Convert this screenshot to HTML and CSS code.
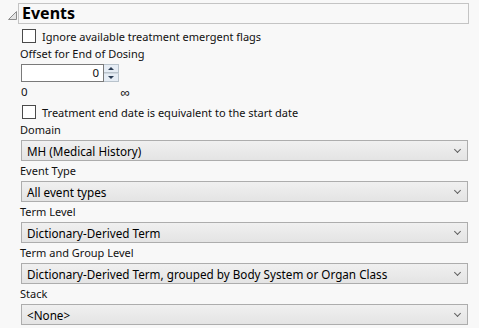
FILE: index.html
```
<!DOCTYPE html>
<html lang="en">
<head>
    <meta charset="UTF-8">
    <title>Events</title>
    <link rel="stylesheet" href="styles.css">
</head>
<body>
    <div class="panel">
        <div class="outline-head">
            <svg class="disclosure" width="9" height="9" viewBox="0 0 9 9">
                <path d="M8.5 0.5 L8.5 8.5 L0.5 8.5 Z" fill="#e4e4e4" stroke="#8c8c8c" stroke-width="1"/>
            </svg>
            <div class="outline-title">Events</div>
        </div>

        <div class="outline-body">
            <label class="check-row">
                <span class="checkbox"></span>
                <span>Ignore available treatment emergent flags</span>
            </label>

            <div class="field-label offset-label">Offset for End of Dosing</div>
            <div class="number-row">
                <div class="number-box">0</div>
                <div class="spinner">
                    <div class="spin-btn spin-up"><span class="arrow-up"></span></div>
                    <div class="spin-btn spin-down"><span class="arrow-down"></span></div>
                </div>
            </div>
            <div class="range-row">
                <span class="range-min">0</span>
                <span class="range-max">&infin;</span>
            </div>

            <label class="check-row check-second">
                <span class="checkbox"></span>
                <span>Treatment end date is equivalent to the start date</span>
            </label>

            <div class="field-label">Domain</div>
            <div class="combo"><span>MH (Medical History)</span><span class="chevron"></span></div>

            <div class="field-label">Event Type</div>
            <div class="combo"><span>All event types</span><span class="chevron"></span></div>

            <div class="field-label">Term Level</div>
            <div class="combo"><span>Dictionary-Derived Term</span><span class="chevron"></span></div>

            <div class="field-label">Term and Group Level</div>
            <div class="combo"><span>Dictionary-Derived Term, grouped by Body System or Organ Class</span><span class="chevron"></span></div>

            <div class="field-label">Stack</div>
            <div class="combo"><span>&lt;None&gt;</span><span class="chevron"></span></div>
        </div>
    </div>
</body>
</html>
```

FILE: styles.css
```
body {
    margin: 0;
    background: #f8f8f8;
    font-family: 'Noto Sans', sans-serif;
    font-size: 11px;
    color: #111;
}

.panel {
    padding: 3px 10px 0 8px;
}

.outline-head {
    display: flex;
    align-items: center;
    height: 21px;
}

.disclosure {
    margin-top: 3px;
    margin-right: 1px;
}

.outline-title {
    flex: 1;
    height: 19px;
    line-height: 19px;
    border: 1px solid #c4c4c4;
    padding-left: 3px;
    font-size: 16px;
    font-weight: bold;
    color: #000;
}

.outline-body {
    padding-left: 12px;
}

.check-row {
    display: flex;
    align-items: center;
    height: 18px;
    margin-top: 3px;
}

.checkbox {
    width: 12px;
    height: 12px;
    border: 1px solid #4a4a4a;
    background: #fff;
    margin-left: 2px;
    margin-right: 6px;
}

.check-second {
    margin-top: 2px;
    height: 16px;
}

.field-label {
    height: 20px;
    line-height: 20px;
}

.offset-label {
    height: 17px;
    line-height: 17px;
}

.number-row {
    display: flex;
    margin-top: 2px;
    margin-left: 1px;
}

.number-box {
    width: 77px;
    height: 16px;
    line-height: 16px;
    border: 1px solid #7a7a7a;
    background: #fff;
    text-align: right;
    padding-right: 4px;
    font-size: 11.5px;
}

.spinner {
    display: flex;
    flex-direction: column;
    width: 15px;
    height: 18px;
}

.spin-btn {
    flex: 1;
    display: flex;
    align-items: center;
    justify-content: center;
    background: #e6edf5;
    border: 1px solid #b9c3cc;
    border-left: none;
}

.spin-down {
    border-top: 1px solid #d0d8e0;
}

.arrow-up {
    border-left: 3px solid transparent;
    border-right: 3px solid transparent;
    border-bottom: 3px solid #2b3d55;
}

.arrow-down {
    border-left: 3px solid transparent;
    border-right: 3px solid transparent;
    border-top: 3px solid #2b3d55;
}

.range-row {
    display: flex;
    height: 20px;
    line-height: 20px;
    margin-left: 1px;
    font-size: 11.5px;
}

.range-max {
    margin-left: 93px;
    font-size: 13px;
}

.combo {
    display: flex;
    align-items: center;
    justify-content: space-between;
    height: 19px;
    margin-left: 1px;
    width: 435px;
    padding: 0 5px 0 5px;
    border: 1px solid #adadad;
    background: linear-gradient(#f0f0f0, #e4e4e4);
    color: #000;
    font-size: 11.7px;
}

.chevron {
    width: 4px;
    height: 4px;
    border-right: 1.5px solid #606060;
    border-bottom: 1.5px solid #606060;
    transform: rotate(45deg);
    margin-right: 2px;
    margin-top: -3px;
}
```
